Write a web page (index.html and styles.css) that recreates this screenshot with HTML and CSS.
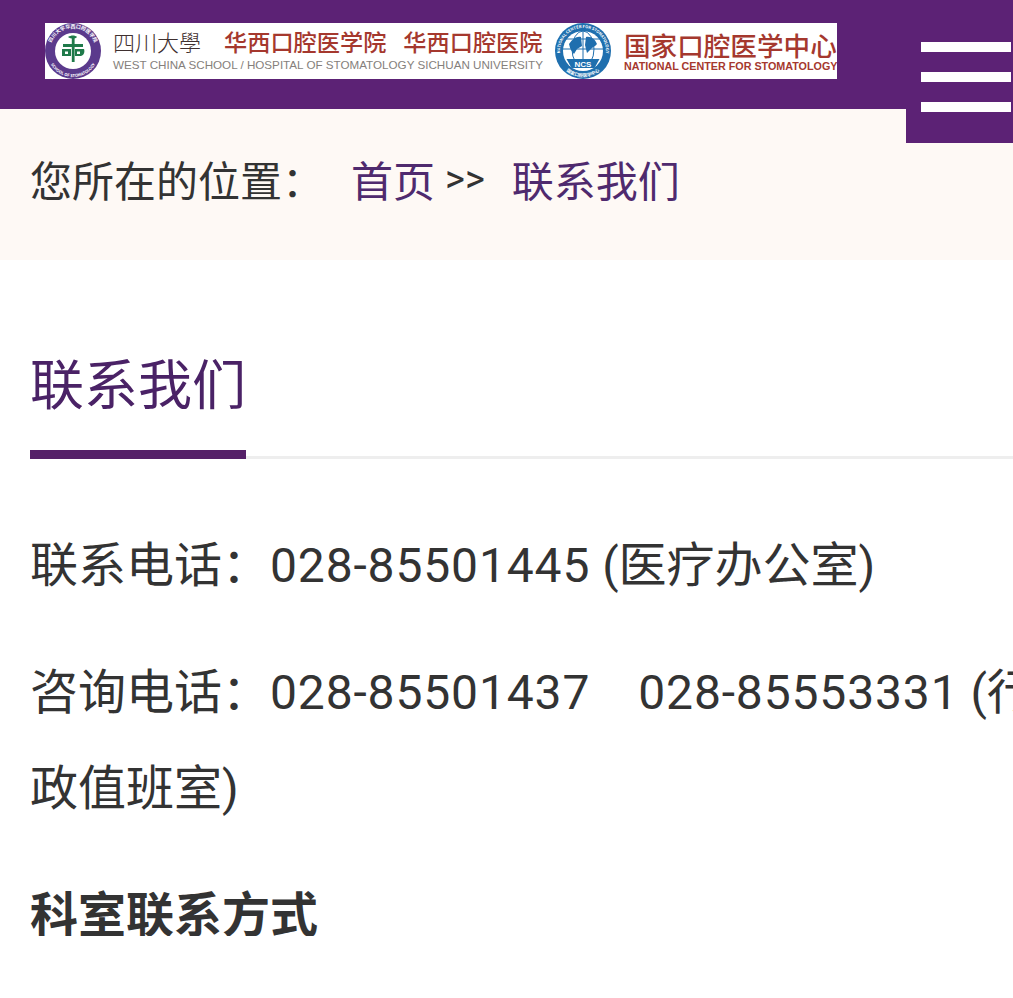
FILE: index.html
```html
<!DOCTYPE html>
<html lang="zh-CN">
<head>
    <meta charset="UTF-8">
    <meta name="viewport" content="width=device-width, initial-scale=1.0">
    <title>联系我们</title>
    <link rel="stylesheet" href="styles.css">
</head>
<body>
    <header class="top-bar">
        <div class="logo">
            <svg class="emblem" viewBox="0 0 56 56" width="56" height="56">
                <defs>
                    <path id="ringA" d="M5 28 A23 23 0 1 1 51 28"/>
                    <path id="ringB" d="M2.700 34 A26 26 0 0 0 53.300 34"/>
                </defs>
                <circle cx="28" cy="28" r="28" fill="#5b3a8c"/>
                <circle cx="28" cy="28" r="18" fill="#fff"/>
                <text class="ring-text"><textPath href="#ringA" startOffset="50%" text-anchor="middle">四川大学华西口腔医学院</textPath></text>
                <text class="ring-text ring-small"><textPath href="#ringB" startOffset="50%" text-anchor="middle">SCHOOL OF STOMATOLOGY</textPath></text>
                <path d="M26.800 13h2.800v26h-2.800z" fill="#1f7a4a"/>
                <path d="M18 21h20v3H18zM17 26h9v7h-9zM30 26h9c1 3 0 6-3 7h-6z" fill="#1f7a4a"/>
                <path d="M20 28.500h3v2.500h-3zM32 28.500h3v2.500h-3z" fill="#fff"/>
                <path d="M23 14c3-2 7-2 9 0-2 2-6 2-9 0z" fill="#1f7a4a"/>
            </svg>
            <div class="logo-school">
                <div class="logo-cn">
                    <span class="logo-scu">四川大學</span>
                    <i class="logo-sep"></i>
                    <span class="logo-name">华西口腔医学院</span>
                    <span class="logo-name">华西口腔医院</span>
                </div>
                <div class="logo-en">WEST CHINA SCHOOL / HOSPITAL OF STOMATOLOGY SICHUAN UNIVERSITY</div>
            </div>
            <svg class="emblem emblem-ncs" viewBox="0 0 56 56" width="56" height="56">
                <defs>
                    <path id="ringC" d="M9.200 41.200 A23 23 0 1 1 46.800 41.200"/>
                    <path id="ringD" d="M2.700 34 A26 26 0 0 0 53.300 34"/>
                </defs>
                <circle cx="28" cy="28" r="28" fill="#1f6fae"/>
                <circle cx="28" cy="28" r="20" fill="#fff"/>
                <text class="ring-text ring-small"><textPath href="#ringC" startOffset="50%" text-anchor="middle">NATIONAL CENTER FOR STOMATOLOGY</textPath></text>
                <text class="ring-text ring-cn"><textPath href="#ringD" startOffset="50%" text-anchor="middle">国家口腔医学中心</textPath></text>
                <g fill="none" stroke="#1f6fae" stroke-width="1">
                    <ellipse cx="28" cy="26" rx="11" ry="18"/>
                    <path d="M8 26h40M11 16h34M28 8v28"/>
                </g>
                <path d="M14 21c4-6 8-8 12-7l1 9-5 3-3 5c-2-2-4-5-5-10zM31 14c5-1 9 2 11 7-2 3-5 3-7 6l-3 3-2-8z" fill="#1f6fae"/>
                <path d="M11.500 36h33l-5 9H16.500z" fill="#1f6fae"/>
                <text class="ncs-text" x="28" y="43.500" text-anchor="middle">NCS</text>
            </svg>
            <div class="logo-center">
                <div class="logo-center-cn">国家口腔医学中心</div>
                <div class="logo-center-en">NATIONAL CENTER FOR STOMATOLOGY</div>
            </div>
        </div>
        <button class="menu-btn" type="button" aria-label="菜单">
            <span></span>
            <span></span>
            <span></span>
        </button>
    </header>

    <div class="crumbs">
        <span class="crumbs-label">您所在的位置：</span>
        <a class="crumbs-link" href="#">首页</a>
        <span class="crumbs-arrow">&gt;&gt;</span>
        <a class="crumbs-link" href="#">联系我们</a>
    </div>

    <main class="content">
        <div class="section-head">
            <h1 class="section-title">联系我们</h1>
        </div>
        <p class="info">联系电话：<span class="num">028-85501445</span>&nbsp;(医疗办公室)</p>
        <p class="info">咨询电话：<span class="num">028-85501437</span>　<span class="num">028-85553331</span>&nbsp;(行<br>政值班室)</p>
        <p class="info info-bold">科室联系方式</p>
    </main>
</body>
</html>
```

FILE: styles.css
```css
html, body {
    margin: 0;
    padding: 0;
    overflow: hidden;
}
body {
    font-family: Roboto, "Noto Sans CJK SC", sans-serif;
    background-color: #fff;
    color: #333;
}
a {
    text-decoration: none;
}

/* top bar */
.top-bar {
    position: relative;
    height: 109px;
    box-sizing: border-box;
    padding: 23px 0 0 45px;
    background-color: #5c2275;
}
.logo {
    display: flex;
    width: 792px;
    height: 56px;
    background: #fff;
    overflow: hidden;
}
.emblem {
    flex: none;
}
.emblem-ncs {
    margin-left: 12px;
}
.ring-text {
    font-family: "Noto Sans CJK SC", sans-serif;
    font-size: 5px;
    font-weight: 700;
    fill: #fff;
}
.ring-small {
    font-size: 4px;
}
.ring-cn {
    font-size: 4.500px;
}
.ncs-text {
    font-family: "Liberation Sans", sans-serif;
    font-size: 8px;
    font-weight: 700;
    fill: #fff;
}
.logo-school {
    width: 430px;
    margin-left: 12px;
    flex: none;
}
.logo-cn {
    display: flex;
    align-items: center;
    height: 36px;
    font-family: "Noto Sans CJK SC", sans-serif;
    white-space: nowrap;
}
.logo-scu {
    width: 89px;
    font-size: 22px;
    font-weight: 300;
    color: #3f3030;
}
.logo-sep {
    width: 1px;
    height: 17px;
    margin: 0 11px 0 12px;
    background: #bbb;
}
.logo-name {
    font-size: 23.2px;
    font-weight: 500;
    color: #a5382e;
    margin-right: 17px;
}
.logo-en {
    font-family: "Liberation Sans", sans-serif;
    font-size: 11.65px;
    line-height: 12px;
    color: #857f7c;
    white-space: nowrap;
}
.logo-center {
    margin-left: 13px;
    flex: none;
    width: 213px;
}
.logo-center-cn {
    height: 29px;
    margin: 8px 0 0;
    font-family: "Noto Sans CJK SC", sans-serif;
    font-size: 26.6px;
    font-weight: 500;
    line-height: 27px;
    color: #a5382e;
    white-space: nowrap;
}
.logo-center-en {
    font-family: "Liberation Sans", sans-serif;
    font-size: 10.75px;
    font-weight: 700;
    line-height: 12px;
    color: #a5382e;
    white-space: nowrap;
}
.menu-btn {
    position: absolute;
    top: 0;
    right: 0;
    display: flex;
    flex-direction: column;
    gap: 20px;
    width: 107px;
    height: 143px;
    box-sizing: border-box;
    padding: 42px 2px 0 15px;
    border: none;
    background-color: #5c2275;
}
.menu-btn span {
    display: block;
    height: 10px;
    background: #fff;
}

/* breadcrumb */
.crumbs {
    display: flex;
    align-items: center;
    height: 151px;
    box-sizing: border-box;
    padding: 0 0 12px 30px;
    background-color: #fef9f5;
    font-size: 42px;
    white-space: nowrap;
}
.crumbs-label {
    width: 321px;
}
.crumbs-link {
    color: #4f2a6e;
}
.crumbs-arrow {
    margin: 0 27px 0 10px;
    font-size: 38px;
}

/* content */
.content {
    padding-top: 94px;
}
.section-head {
    margin-left: 30px;
    border-bottom: 3px solid #eee;
}
.section-title {
    display: block;
    width: 216px;
    margin: 0 0 -3px;
    padding-bottom: 30px;
    border-bottom: 9px solid #552068;
    font-size: 54px;
    font-weight: 400;
    line-height: 66px;
    color: #4a2266;
}
.info {
    margin: 59px 0 -28px 30px;
    font-size: 48px;
    line-height: 96px;
    white-space: nowrap;
}
.info .num {
    letter-spacing: 0.85px;
}
.info-bold {
    font-weight: 700;
}
```
